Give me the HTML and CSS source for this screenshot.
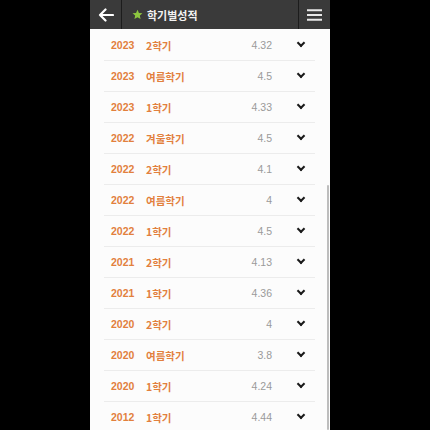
FILE: index.html
```html
<!DOCTYPE html>
<html lang="ko">
<head>
<meta charset="utf-8">
<link rel="stylesheet" href="styles.css">
</head>
<body>
<div class="phone">
  <header class="topbar">
    <div class="btn back">
      <svg width="16" height="14" viewBox="0 0 16 14"><path d="M15 7H2M7.5 1.5L2 7l5.5 5.5" fill="none" stroke="#fff" stroke-width="2.2" stroke-linecap="round" stroke-linejoin="round"/></svg>
    </div>
    <div class="title">
      <svg class="star" width="11" height="11" viewBox="0 0 24 24"><path d="M12 1.5l3.2 7 7.6.8-5.7 5.1 1.6 7.5L12 18l-6.7 3.9 1.6-7.5L1.2 9.3l7.6-.8z" fill="#8dc63f"/></svg>
      <span>학기별성적</span>
    </div>
    <div class="btn menu">
      <svg width="15" height="12" viewBox="0 0 15 12"><path d="M0 1.2h15M0 6h15M0 10.8h15" stroke="#e8e8e8" stroke-width="2"/></svg>
    </div>
  </header>
  <ul class="list">
    <li class="row"><span class="year">2023</span><span class="sem">2학기</span><span class="gpa">4.32</span><span class="chev"></span></li>
    <li class="row"><span class="year">2023</span><span class="sem">여름학기</span><span class="gpa">4.5</span><span class="chev"></span></li>
    <li class="row"><span class="year">2023</span><span class="sem">1학기</span><span class="gpa">4.33</span><span class="chev"></span></li>
    <li class="row"><span class="year">2022</span><span class="sem">겨울학기</span><span class="gpa">4.5</span><span class="chev"></span></li>
    <li class="row"><span class="year">2022</span><span class="sem">2학기</span><span class="gpa">4.1</span><span class="chev"></span></li>
    <li class="row"><span class="year">2022</span><span class="sem">여름학기</span><span class="gpa">4</span><span class="chev"></span></li>
    <li class="row"><span class="year">2022</span><span class="sem">1학기</span><span class="gpa">4.5</span><span class="chev"></span></li>
    <li class="row"><span class="year">2021</span><span class="sem">2학기</span><span class="gpa">4.13</span><span class="chev"></span></li>
    <li class="row"><span class="year">2021</span><span class="sem">1학기</span><span class="gpa">4.36</span><span class="chev"></span></li>
    <li class="row"><span class="year">2020</span><span class="sem">2학기</span><span class="gpa">4</span><span class="chev"></span></li>
    <li class="row"><span class="year">2020</span><span class="sem">여름학기</span><span class="gpa">3.8</span><span class="chev"></span></li>
    <li class="row"><span class="year">2020</span><span class="sem">1학기</span><span class="gpa">4.24</span><span class="chev"></span></li>
    <li class="row"><span class="year">2012</span><span class="sem">1학기</span><span class="gpa">4.44</span><span class="chev"></span></li>
  </ul>
  <div class="scrollbar"></div>
</div>
</body>
</html>
```
FILE: styles.css
```css
html, body {
  margin: 0;
  padding: 0;
  background: #000;
  height: 430px;
  overflow: hidden;
}
.phone {
  position: relative;
  width: 240px;
  height: 430px;
  margin-left: 90px;
  background: #fcfcfc;
  overflow: hidden;
  font-family: "Noto Sans CJK KR", "Noto Sans", sans-serif;
}
.topbar {
  display: flex;
  align-items: stretch;
  height: 29px;
  background: #3a3a3a;
}
.btn {
  display: flex;
  align-items: center;
  justify-content: center;
  width: 31px;
}
.back { border-right: 1px solid #1c1c1c; }
.menu { border-left: 1px solid #1c1c1c; }
.title {
  flex: 1;
  display: flex;
  align-items: center;
  gap: 4px;
  padding-left: 10px;
  color: #f2f2f2;
  font-size: 11px;
  font-weight: 700;
}
.star { margin-top: -1px; }
.list {
  list-style: none;
  margin: 0;
  padding: 1px 15px 0 14px;
}
.row {
  display: grid;
  grid-template-columns: 35px 1fr auto 43px;
  align-items: center;
  height: 30px;
  padding-left: 7px;
  border-bottom: 1px solid #ececec;
  font-size: 10.5px;
}
.year, .sem {
  color: #e2803d;
  font-weight: 700;
}
.year { font-family: "Liberation Sans", "Noto Sans CJK KR", sans-serif; }
.gpa {
  color: #9a9a9a;
  font-family: "Liberation Sans", sans-serif;
}
.chev {
  justify-self: end;
  margin-right: 11px;
  width: 4px;
  height: 4px;
  border-right: 2px solid #1a1a1a;
  border-bottom: 2px solid #1a1a1a;
  transform: translateY(-2px) rotate(45deg);
}
.scrollbar {
  position: absolute;
  right: 1px;
  top: 185px;
  width: 2px;
  height: 245px;
  background: #bdbdbd;
  border-radius: 1px;
}
```
